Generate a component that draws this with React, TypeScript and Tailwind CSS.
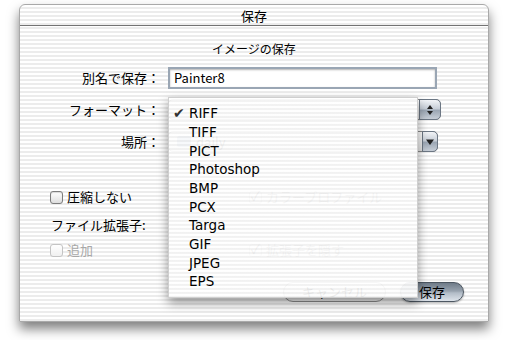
import React from "react";

const items = ["RIFF", "TIFF", "PICT", "Photoshop", "BMP", "PCX", "Targa", "GIF", "JPEG", "EPS"];

const UpDown = () => (
	<svg width="8" height="12" viewBox="0 0 8 12">
		<path d="M4 1 L7 5 L1 5 Z" fill="#222" />
		<path d="M4 11 L7 7 L1 7 Z" fill="#222" />
	</svg>
);

const Down = () => (
	<svg width="10" height="8" viewBox="0 0 10 8">
		<path d="M1 1.5 L9 1.5 L5 7 Z" fill="#222" />
	</svg>
);

const Checkbox = ({ disabled, checked }: { disabled?: boolean; checked?: boolean }) => (
	<span
		className={
			disabled
				? "relative inline-block w-[13px] h-[13px] rounded-[3px] border border-[#c4c4c4] bg-[linear-gradient(to_bottom,#ffffff,#f0f0f0)]"
				: "relative inline-block w-[13px] h-[13px] rounded-[3px] border border-[#7d7d7d] bg-[linear-gradient(to_bottom,#ffffff,#dedede)] shadow-[inset_0_1px_1px_rgba(0,0,0,0.15)]"
		}
	>
		{checked && (
			<span className="absolute -top-[4px] left-[1px] text-[13px] leading-[16px] text-[#555]">✓</span>
		)}
	</span>
);

export default function App() {
	return (
		<div className="w-[510px] h-[340px] bg-white pl-[19px] pt-[4px] font-['Noto_Sans_CJK_JP',sans-serif] text-black overflow-hidden">
			<div className="relative w-[470px] h-[318px] rounded-t-[6px] border border-[#a9a9a9] shadow-[0_7px_12px_rgba(0,0,0,0.5)] bg-[image:repeating-linear-gradient(to_bottom,#ffffff_0px,#ffffff_2px,#ececec_2px,#ececec_4px)] flex flex-col">
				<div className="h-[21px] border-b border-[#737373] flex items-center justify-center text-[13px] leading-none">
					保存
				</div>

				<div className="mt-[15px] text-center text-[12px] leading-[16px]">イメージの保存</div>

				<div className="mt-[10px] flex items-center h-[22px]">
					<div className="w-[140px] text-right text-[13px]">別名で保存：</div>
					<div className="ml-[8px] w-[269px] h-[22px] border-2 border-[#9aa6b4] bg-white shadow-[inset_0_1px_2px_rgba(0,0,0,0.3)] flex items-center px-[4px] text-[13px]">
						Painter8
					</div>
				</div>

				<div className="mt-[10px] flex items-center h-[21px]">
					<div className="w-[140px] text-right text-[13px]">フォーマット：</div>
					<div className="ml-[8px] w-[273px] h-[21px] flex rounded-[5px] border border-[#8c8c8c] bg-[linear-gradient(to_bottom,#ffffff,#e4e4e4)]">
						<div className="flex-1" />
						<div className="w-[22px] -my-[1px] -mr-[1px] rounded-r-[5px] border border-[#6c7784] bg-[linear-gradient(to_bottom,#f2f4f7_0%,#c8cfd8_45%,#9ba6b3_55%,#c7ced7_100%)] flex items-center justify-center">
							<UpDown />
						</div>
					</div>
				</div>

				<div className="mt-[11px] flex items-center h-[21px]">
					<div className="w-[140px] text-right text-[13px]">場所：</div>
					<div className="ml-[8px] w-[270px] h-[21px] flex rounded-[5px] border border-[#8c8c8c] bg-[linear-gradient(to_bottom,#ffffff,#e4e4e4)]">
						<div className="flex-1 pl-[8px] flex items-center gap-[5px] text-[13px] text-[#444]">
							<span className="inline-block w-[14px] h-[11px] rounded-[2px] bg-[#8fa7c6]" />
							daily
						</div>
						<div className="w-[16px] -my-[1px] -mr-[1px] rounded-r-[5px] border border-[#6c7784] bg-[linear-gradient(to_bottom,#f2f4f7_0%,#c8cfd8_45%,#9ba6b3_55%,#c7ced7_100%)] flex items-center justify-center">
							<Down />
						</div>
					</div>
				</div>

				<div className="mt-[37px] flex items-center h-[16px] text-[13px]">
					<div className="w-[229px] pl-[30px] flex items-center gap-[4px]">
						<Checkbox />
						<span>圧縮しない</span>
					</div>
					<div className="flex items-center gap-[4px] text-[#888]">
						<Checkbox disabled checked />
						<span>カラープロファイル</span>
					</div>
				</div>

				<div className="mt-[12px] h-[16px] pl-[31px] text-[13px] leading-[16px]">ファイル拡張子:</div>

				<div className="mt-[9px] flex items-center h-[16px] text-[13px]">
					<div className="w-[229px] pl-[30px] flex items-center gap-[4px] text-[#a8a8a8]">
						<Checkbox disabled />
						<span>追加</span>
					</div>
					<div className="flex items-center gap-[4px] text-[#888]">
						<Checkbox disabled checked />
						<span>拡張子を隠す</span>
					</div>
				</div>

				<div className="mt-[24px] flex justify-end gap-[14px] pr-[24px] text-[13px]">
					<div className="w-[103px] h-[20px] rounded-full border border-[#8e8e8e] bg-[linear-gradient(to_bottom,#ffffff_0%,#ececec_50%,#dadada_55%,#f4f4f4_100%)] flex items-center justify-center">
						キャンセル
					</div>
					<div className="w-[64px] h-[20px] rounded-full border border-[#4d5762] bg-[linear-gradient(to_bottom,#6f7b88_0%,#98a3af_45%,#b2bcc7_55%,#dde3ea_100%)] shadow-[0_1px_2px_rgba(0,0,0,0.3)] flex items-center justify-center">
						保存
					</div>
				</div>

				<div className="absolute left-[148px] top-[92px] w-[250px] h-[201px] pt-[6px] border border-[#cfcfcf] bg-[image:repeating-linear-gradient(to_bottom,rgba(255,255,255,0.93)_0px,rgba(255,255,255,0.93)_2px,rgba(242,242,242,0.93)_2px,rgba(242,242,242,0.93)_4px)] shadow-[0_5px_10px_rgba(0,0,0,0.4)] font-['DejaVu_Sans',sans-serif] text-[13.5px]">
					{items.map((it, i) => (
						<div key={it} className="relative h-[18.7px] flex items-center pl-[20px]">
							{i === 0 && (
								<span className="absolute left-[4px] text-[14px] text-[#333]">✔</span>
							)}
							{it}
						</div>
					))}
				</div>
			</div>
		</div>
	);
}
